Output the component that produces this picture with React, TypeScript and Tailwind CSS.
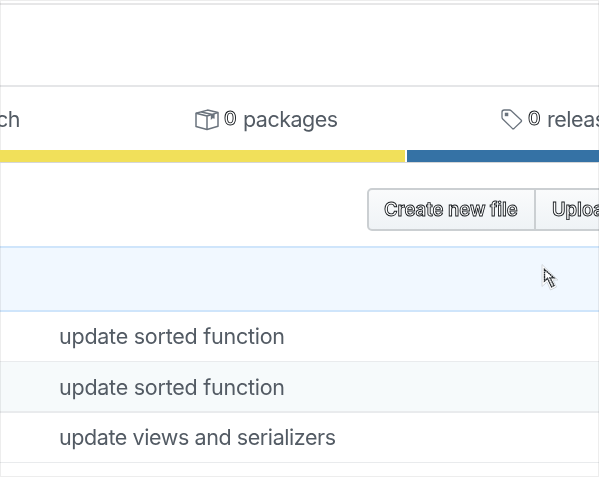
import React from "react";

const strokeText = "font-semibold text-white [-webkit-text-stroke:0.9px_#14181c]";

function PackageIcon() {
  return (
    <svg className="block h-[22px] w-6 shrink-0" viewBox="0 0 24 22" fill="none" stroke="#6a737d" strokeWidth="1.5" strokeLinejoin="round">
      <path d="M1 4.2 12.5 1.1 23 3.6v13.6l-11 3.3L1 17.6Z" />
      <path d="M1 4.2 12 7 23 3.6M12 7v13.3M6.3 2.9l11.2 2.6" />
      <path d="M15.8 5.5v5.4l1.8-1.7 2 .5V4.4Z" fill="#6a737d" stroke="none" />
    </svg>
  );
}

function TagIcon() {
  return (
    <svg className="block h-[22px] w-[22px] shrink-0" viewBox="0 0 22 22" fill="none" stroke="#6a737d" strokeWidth="1.3" strokeLinejoin="round">
      <path d="M1 3.2Q1 1 3.2 1h5.2q1 0 1.8.7l9.9 9.2q.9.9 0 1.8l-7 6.7q-.9.8-1.8 0L1.7 10Q1 9.3 1 8.3Z" />
      <rect x="3.8" y="3.7" width="3.5" height="3.5" fill="#6a737d" stroke="none" />
    </svg>
  );
}

function Row({ text, className }: { text: string; className: string }) {
  return (
    <div className={"flex shrink-0 items-center border-[#e9ebed] pl-[59px] text-[21.5px] whitespace-pre " + className}>
      {text}
    </div>
  );
}

export default function App() {
  return (
    <div className="relative flex h-[477px] w-[599px] flex-col overflow-hidden bg-white font-['Inter','Liberation_Sans',sans-serif] text-[#535b64] will-change-transform">
      <div className="h-[5px] shrink-0 border-b-2 border-[#e7e7e8]" />
      <div className="h-[82px] shrink-0 border-b-2 border-[#e5e6e8]" />
      <div className="flex h-[63px] shrink-0 items-center pt-[2px] text-[21.5px] tracking-[-0.5px] whitespace-pre">
        <span className="-ml-[4px] w-[199px] shrink-0">ch</span>
        <span className="flex w-[306px] shrink-0 items-center">
          <PackageIcon />
          <span className={"ml-[5px] w-[19px] text-[19px] " + strokeText}>0</span>
          <span>packages</span>
        </span>
        <span className="flex shrink-0 items-center">
          <TagIcon />
          <span className={"ml-[5px] w-[19px] text-[19px] " + strokeText}>0</span>
          <span>releases</span>
        </span>
      </div>
      <div className="relative z-10 flex h-[13px] shrink-0 gap-[2px] border-b border-[#d5d6d7]">
        <div className="w-[405px] bg-[#f1e05a]" />
        <div className="flex-1 bg-[#3572a5]" />
      </div>
      <div className="flex h-[83px] shrink-0 pt-[25px] pl-[367px] text-[18.5px] tracking-[-0.04px] whitespace-pre">
        <div className={"flex h-[43px] w-[169px] shrink-0 items-center rounded-l-[5px] border-2 border-[#cbcfd2] bg-linear-to-b from-[#fafbfc] to-[#eff3f6] pt-px pl-[15px] " + strokeText}>Create new file</div>
        <div className={"flex h-[43px] w-[150px] shrink-0 items-center border-y-2 border-[#cbcfd2] bg-linear-to-b from-[#fafbfc] to-[#eff3f6] pt-px pl-[16px] " + strokeText}>Upload files</div>
      </div>
      <div className="h-[66px] shrink-0 border-y-2 border-[#cfe5fb] bg-[#f1f8ff]" />
      <Row text="update sorted function" className="h-[50px] border-b tracking-[-0.25px]" />
      <Row text="update sorted function" className="h-[51px] border-b-2 bg-[#f6fafb] pt-px tracking-[-0.25px]" />
      <Row text="update views and serializers" className="h-[50px] border-b tracking-[-0.42px]" />
      <div className="pointer-events-none absolute inset-0 border border-black/7" />
      <svg className="absolute top-[263px] left-[539px] h-8 w-6" viewBox="0 0 24 32">
        <path d="M3 1.5v22l5-4.5 3.5 8 6-3-3.5-7h5Z" fill="#fff" stroke="#d3d8dd" strokeWidth="1" />
        <path d="M5.5 6.5v11.5l3-2.7 4 8.5 2.5-1.3-4-7.6h4Z" fill="#fff" stroke="#22272b" strokeWidth="1.4" strokeDasharray="1.8 .4" />
      </svg>
    </div>
  );
}
